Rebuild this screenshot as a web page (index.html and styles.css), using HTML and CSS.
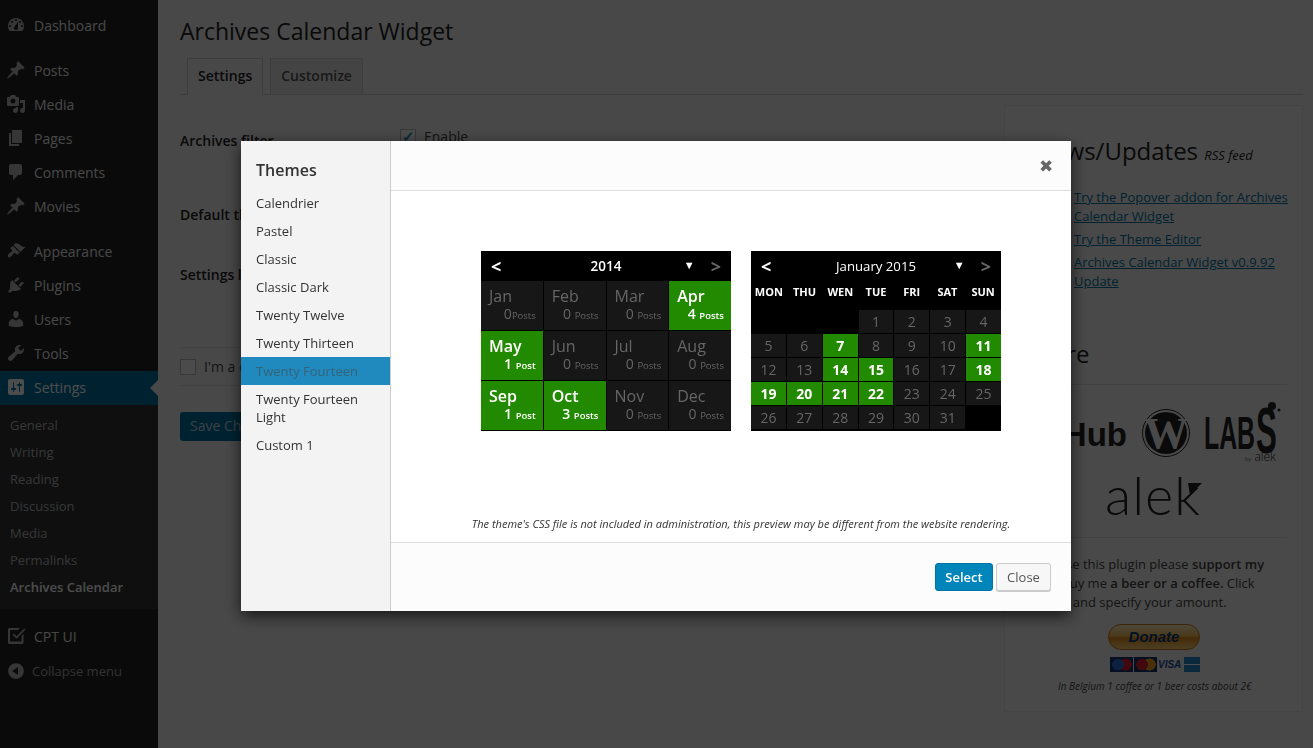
FILE: index.html
```html
<!DOCTYPE html>
<html>
<head>
  <title>Archives Calendar Widget</title>
  <link rel="stylesheet" href="styles.css">
</head>
<body>
  <div class="sidebar">
    <ul class="menu">
      <li class="group"><svg viewBox="0 0 20 20"><path d="M3.76 16h12.48c1.1-1.37 1.76-3.11 1.76-5 0-4.42-3.58-8-8-8s-8 3.58-8 8c0 1.89.66 3.63 1.76 5zM10 4c.55 0 1 .45 1 1s-.45 1-1 1-1-.45-1-1 .45-1 1-1zM6 6c.55 0 1 .45 1 1s-.45 1-1 1-1-.45-1-1 .45-1 1-1zm8 0c.55 0 1 .45 1 1s-.45 1-1 1-1-.45-1-1 .45-1 1-1zm-5.37 5.55L12 7v6c0 1.1-.9 2-2 2s-2-.9-2-2c0-.57.24-1.08.63-1.45zM4 10c.55 0 1 .45 1 1s-.45 1-1 1-1-.45-1-1 .45-1 1-1zm12 0c.55 0 1 .45 1 1s-.45 1-1 1-1-.45-1-1 .45-1 1-1z"/></svg>Dashboard</li>
      <li><svg viewBox="0 0 20 20"><path d="M10.44 3.02l1.82-1.82 6.36 6.35-1.83 1.82c-1.05-.68-2.48-.57-3.41.36l-.75.75c-.92.93-1.04 2.35-.35 3.41l-1.83 1.82-2.41-2.41-2.8 2.79c-.42.42-3.38 2.71-3.8 2.29s1.86-3.39 2.28-3.81l2.79-2.79L4.1 9.36l1.83-1.82c1.05.69 2.48.57 3.4-.36l.75-.75c.93-.92 1.05-2.35.36-3.41z"/></svg>Posts</li>
      <li><svg viewBox="0 0 20 20"><path d="M13 11V4c0-.55-.45-1-1-1h-1.67L9 1H5L3.67 3H2c-.55 0-1 .45-1 1v7c0 .55.45 1 1 1h10c.55 0 1-.45 1-1zM7 4.5c1.38 0 2.5 1.12 2.5 2.5S8.38 9.5 7 9.5 4.5 8.38 4.5 7 5.62 4.5 7 4.5zM14 6h5v10.5c0 1.38-1.12 2.5-2.5 2.5S14 17.88 14 16.5s1.12-2.5 2.5-2.5c.17 0 .34.02.5.05V9h-3V6zm-4 8.05V13h2v3.5c0 1.38-1.12 2.5-2.5 2.5S7 17.88 7 16.5 8.12 14 9.5 14c.17 0 .34.02.5.05z"/></svg>Media</li>
      <li><svg viewBox="0 0 20 20"><path d="M6 15V2h10v13H6zm-1 1h8v2H3V5h2v11z"/></svg>Pages</li>
      <li><svg viewBox="0 0 20 20"><path d="M5 2h9c1.1 0 2 .9 2 2v7c0 1.1-.9 2-2 2h-2l-5 5v-5H5c-1.1 0-2-.9-2-2V4c0-1.1.9-2 2-2z"/></svg>Comments</li>
      <li class="group"><svg viewBox="0 0 20 20"><path d="M10.44 3.02l1.82-1.82 6.36 6.35-1.83 1.82c-1.05-.68-2.48-.57-3.41.36l-.75.75c-.92.93-1.04 2.35-.35 3.41l-1.83 1.82-2.41-2.41-2.8 2.79c-.42.42-3.38 2.71-3.8 2.29s1.86-3.39 2.28-3.81l2.79-2.79L4.1 9.36l1.83-1.82c1.05.69 2.48.57 3.4-.36l.75-.75c.93-.92 1.05-2.35.36-3.41z"/></svg>Movies</li>
      <li><svg viewBox="0 0 20 20"><path d="M14.48 11.06L7.41 3.99l1.5-1.5c.5-.56 2.3-.47 3.51.32 1.21.8 1.43 1.28 2.91 2.1 1.18.64 2.45 1.26 4.45.85zm-.71.71L6.7 4.7 4.93 6.47c-.39.39-.39 1.02 0 1.41l1.06 1.06c.39.39.39 1.03 0 1.42-.6.6-1.4 1.1-2.2 1.7-.4.3-.7.5-1 .8-.9.9-1.5 2.4-.7 3.2.8.8 2.3.2 3.2-.7.3-.3.6-.7.8-1 .6-.8 1.1-1.6 1.7-2.2.4-.4 1-.4 1.4 0l1.1 1.1c.4.4 1 .4 1.4 0z"/></svg>Appearance</li>
      <li><svg viewBox="0 0 20 20"><path d="M13.11 4.36L9.87 7.6 8 5.73l3.24-3.24c.35-.34 1.05-.2 1.56.32.52.51.66 1.21.31 1.55zm-8 1.77l.91-1.12 9.01 9.01-1.19.84c-.71.71-2.63 1.16-3.82 1.16H6.14L4.9 17.26c-.59.59-1.54.59-2.12 0-.59-.58-.59-1.53 0-2.12l1.24-1.24v-3.88c0-1.13.4-3.19 1.09-3.89zm7.26 3.97l3.24-3.24c.34-.35 1.04-.21 1.55.31.52.51.66 1.21.31 1.55l-3.24 3.25z"/></svg>Plugins</li>
      <li><svg viewBox="0 0 20 20"><path d="M10 9.25c-2.27 0-2.73-3.44-2.73-3.44C7 4.02 7.82 2 9.97 2c2.16 0 2.98 2.02 2.71 3.81 0 0-.41 3.44-2.68 3.44zm0 2.57L12.72 10c2.39 0 4.52 2.33 4.52 4.53v2.49s-3.65 1.13-7.24 1.13c-3.65 0-7.24-1.13-7.24-1.13v-2.49c0-2.25 1.94-4.48 4.47-4.48z"/></svg>Users</li>
      <li><svg viewBox="0 0 20 20"><path d="M16.68 9.77c-1.34 1.34-3.3 1.67-4.95.99l-5.41 6.52c-.99.99-2.59.99-3.58 0s-.99-2.59 0-3.57l6.52-5.42c-.68-1.65-.35-3.61.99-4.95 1.28-1.28 3.12-1.62 4.72-1.06l-2.89 2.89 2.82 2.82 2.86-2.87c.53 1.58.18 3.39-1.08 4.65z"/></svg>Tools</li>
      <li class="active"><svg viewBox="0 0 20 20"><path d="M18 16V4c0-1.1-.9-2-2-2H4c-1.1 0-2 .9-2 2v12c0 1.1.9 2 2 2h12c1.1 0 2-.9 2-2zM8 11h1c.55 0 1 .45 1 1s-.45 1-1 1H8v1.5c0 .28-.22.5-.5.5s-.5-.22-.5-.5V13H6c-.55 0-1-.45-1-1s.45-1 1-1h1V5.5c0-.28.22-.5.5-.5s.5.22.5.5V11zm5-2h-1c-.55 0-1-.45-1-1s.45-1 1-1h1V5.5c0-.28.22-.5.5-.5s.5.22.5.5V7h1c.55 0 1 .45 1 1s-.45 1-1 1h-1v5.5c0 .28-.22.5-.5.5s-.5-.22-.5-.5V9z"/></svg>Settings</li>
    </ul>
    <ul class="submenu">
      <li>General</li>
      <li>Writing</li>
      <li>Reading</li>
      <li>Discussion</li>
      <li>Media</li>
      <li>Permalinks</li>
      <li class="current">Archives Calendar</li>
    </ul>
    <ul class="menu">
      <li class="cpt"><svg viewBox="0 0 20 20"><path d="M3.5 2H14l-2 2H4v11.5h11.5V10l2-2v8.5c0 .8-.7 1.5-1.5 1.5H3.5C2.700 18 2 17.300 2 16.500v-13C2 2.700 2.700 2 3.500 2zM18.200 2.600l1.200 1.200-8.900 9-4-4 1.300-1.300 2.700 2.700z"/></svg>CPT UI</li>
      <li class="collapse"><svg viewBox="0 0 20 20"><path d="M10 2.160c4.330 0 7.840 3.510 7.840 7.840s-3.510 7.840-7.840 7.840S2.160 14.330 2.160 10 5.710 2.160 10 2.160zm2 11.720V6.120L6.180 9.970z"/></svg>Collapse menu</li>
    </ul>
  </div>

  <div class="content">
    <h1>Archives Calendar Widget</h1>
    <div class="tabs">
      <span class="tab tab-active">Settings</span>
      <span class="tab">Customize</span>
    </div>
    <div class="columns">
      <div class="main">
        <div class="form-row row-filter">
          <b>Archives filter</b>
          <span class="enable"><span class="checkbox checked">&#10003;</span>Enable</span>
        </div>
        <div class="form-row row-theme"><b>Default theme</b></div>
        <div class="form-row row-settings"><b>Settings link</b></div>
        <div class="donated"><span class="checkbox"></span>I'm a coffee drinker</div>
        <span class="save-btn">Save Changes</span>
      </div>

      <div class="panel">
        <h2 class="news-title">News/Updates <small>RSS feed</small></h2>
        <ul class="news">
          <li><a>Try the Popover addon for Archives Calendar Widget</a></li>
          <li><a>Try the Theme Editor</a></li>
          <li><a>Archives Calendar Widget v0.9.92 Update</a></li>
        </ul>
        <h2 class="more-title">Share</h2>
        <svg class="logos" viewBox="0 0 263 144">
          <text x="102" y="53" text-anchor="end" class="logo-hub">GitHub</text>
          <circle cx="141" cy="40" r="23.500" class="wp-ring"/>
          <circle cx="141" cy="40" r="21" class="wp-disc"/>
          <text x="141" y="55" text-anchor="middle" class="logo-w">W</text>
          <text transform="translate(179 56) scale(.54 1)" class="logo-labs">LAB</text>
          <text transform="translate(231 60) scale(.48 1)" class="logo-s">S</text>
          <circle cx="247" cy="13" r="4" class="logo-dot"/>
          <circle cx="254" cy="17" r="1.500" class="logo-dot"/>
          <text x="220" y="68" class="logo-by"><tspan class="logo-by-small">by</tspan> alek</text>
          <text x="128" y="122" text-anchor="middle" class="logo-alek">alek</text>
          <path d="M163 90h14l-12 12-1-6z" class="logo-dot"/>
        </svg>
        <p class="support">If you use this plugin please <b>support my</b><br>work, buy me <b>a beer or a coffee.</b> Click<br>Donate and specify your amount.</p>
        <div class="donate-btn">Donate</div>
        <div class="cards">
          <span class="card card-maestro"></span>
          <span class="card card-master"></span>
          <span class="card card-visa">VISA</span>
          <span class="card card-amex"></span>
        </div>
        <p class="cost">In Belgium 1 coffee or 1 beer costs about 2€</p>
      </div>
    </div>
  </div>

  <div class="overlay"></div>

  <div class="modal">
    <div class="modal-side">
      <h3>Themes</h3>
      <ul class="theme-list">
        <li>Calendrier</li>
        <li>Pastel</li>
        <li>Classic</li>
        <li>Classic Dark</li>
        <li>Twenty Twelve</li>
        <li>Twenty Thirteen</li>
        <li class="selected">Twenty Fourteen</li>
        <li>Twenty Fourteen Light</li>
        <li>Custom 1</li>
      </ul>
    </div>
    <div class="modal-main">
      <div class="modal-head"><span class="close-x">&#10006;</span></div>
      <div class="modal-body">
        <div class="previews">
          <div class="cal">
            <div class="cal-head"><span class="nav">&lt;</span><span class="cal-title">2014</span><span class="cal-right"><span class="down">&#9660;</span><span class="nav nav-off">&gt;</span></span></div>
            <div class="months">
              <div class="month"><span class="m">Jan</span><span class="c">0<small>Posts</small></span></div>
              <div class="month"><span class="m">Feb</span><span class="c">0 <small>Posts</small></span></div>
              <div class="month"><span class="m">Mar</span><span class="c">0 <small>Posts</small></span></div>
              <div class="month on"><span class="m">Apr</span><span class="c">4 <small>Posts</small></span></div>
              <div class="month on"><span class="m">May</span><span class="c">1 <small>Post</small></span></div>
              <div class="month"><span class="m">Jun</span><span class="c">0 <small>Posts</small></span></div>
              <div class="month"><span class="m">Jul</span><span class="c">0 <small>Posts</small></span></div>
              <div class="month"><span class="m">Aug</span><span class="c">0 <small>Posts</small></span></div>
              <div class="month on"><span class="m">Sep</span><span class="c">1 <small>Post</small></span></div>
              <div class="month on"><span class="m">Oct</span><span class="c">3 <small>Posts</small></span></div>
              <div class="month"><span class="m">Nov</span><span class="c">0 <small>Posts</small></span></div>
              <div class="month"><span class="m">Dec</span><span class="c">0 <small>Posts</small></span></div>
            </div>
          </div>
          <div class="cal">
            <div class="cal-head"><span class="nav">&lt;</span><span class="cal-title cal-title-month">January 2015</span><span class="cal-right"><span class="down">&#9660;</span><span class="nav nav-off">&gt;</span></span></div>
            <div class="weekdays"><span>MON</span><span>THU</span><span>WEN</span><span>TUE</span><span>FRI</span><span>SAT</span><span>SUN</span></div>
            <div class="days">
              <span class="blank"></span><span class="blank"></span><span class="blank"></span><span>1</span><span>2</span><span>3</span><span>4</span>
              <span>5</span><span>6</span><span class="on">7</span><span>8</span><span>9</span><span>10</span><span class="on">11</span>
              <span>12</span><span>13</span><span class="on">14</span><span class="on">15</span><span>16</span><span>17</span><span class="on">18</span>
              <span class="on">19</span><span class="on">20</span><span class="on">21</span><span class="on">22</span><span>23</span><span>24</span><span>25</span>
              <span>26</span><span>27</span><span>28</span><span>29</span><span>30</span><span>31</span><span class="blank"></span>
            </div>
          </div>
        </div>
        <p class="note">The theme's CSS file is not included in administration, this preview may be different from the website rendering.</p>
      </div>
      <div class="modal-foot">
        <span class="btn btn-primary">Select</span>
        <span class="btn">Close</span>
      </div>
    </div>
  </div>
</body>
</html>
```

FILE: styles.css
```css
* {
  box-sizing: border-box;
}

html, body {
  height: 100%;
}

body {
  margin: 0;
  display: flex;
  height: 748px;
  overflow: hidden;
  background: #f1f1f1;
  color: #444;
  font-family: "Open Sans", sans-serif;
  font-size: 14px;
}

ul {
  list-style: none;
  margin: 0;
  padding: 0;
}

/* admin sidebar */
.sidebar {
  width: 158px;
  flex: none;
  padding-top: 9px;
  background: #222;
  color: #eee;
}

.menu li {
  display: flex;
  align-items: center;
  height: 34px;
  padding: 0 0 2px 6px;
  font-size: 14px;
}

.menu li svg {
  width: 20px;
  height: 20px;
  margin-right: 8px;
  flex: none;
  fill: #b4b4b4;
}

.menu li.group {
  margin-bottom: 11px;
}

.menu li.active {
  position: relative;
  background: #0074a2;
  color: #fff;
}

.menu li.active svg {
  fill: #fff;
}

.menu li.active::after {
  content: "";
  position: absolute;
  right: 0;
  top: 9px;
  border: 8px solid transparent;
  border-right-color: #f1f1f1;
  border-left-width: 0;
}

.submenu {
  padding: 7px 0 8px;
  background: #333;
  margin-bottom: 11px;
}

.submenu li {
  height: 27px;
  line-height: 27px;
  padding-left: 10px;
  font-size: 13px;
  color: #b4b9be;
}

.submenu li.current {
  font-weight: 600;
  color: #fff;
}

.menu li.cpt {
  color: #eee;
}

.menu li.collapse {
  padding-bottom: 0;
  color: #aaa;
  font-size: 13px;
}

.menu li.collapse svg {
  margin-right: 6px;
}

/* page behind the modal */
.content {
  flex: 1;
  padding: 0 17px 0 22px;
}

h1 {
  margin: 0;
  padding-top: 15px;
  height: 58px;
  font-size: 23px;
  font-weight: 400;
  line-height: 32px;
  color: #222;
}

.tabs {
  display: flex;
  gap: 7px;
  padding-left: 7px;
  height: 37px;
  border-bottom: 1px solid #ccc;
}

.tab {
  height: 37px;
  padding: 0 10px;
  line-height: 34px;
  border: 1px solid #ccc;
  font-weight: 600;
  color: #555;
  background: #e4e4e4;
}

.tab-active {
  background: #f1f1f1;
  border-bottom-color: #f1f1f1;
  color: #222;
}

.columns {
  display: flex;
}

.main {
  width: 824px;
  flex: none;
}

.form-row {
  color: #222;
  line-height: 20px;
}

.form-row b {
  font-weight: 600;
}

.row-filter {
  display: flex;
  padding: 36px 0 0;
  height: 110px;
}

.row-filter b {
  width: 220px;
}

.row-theme {
  height: 60px;
}

.row-settings {
  height: 82px;
}

.enable {
  display: flex;
  align-items: center;
  height: 20px;
  margin-top: -4px;
  gap: 8px;
  color: #444;
}

.checkbox {
  display: inline-block;
  width: 16px;
  height: 16px;
  line-height: 13px;
  border: 1px solid #b4b9be;
  background: #fbfbfb;
  text-align: center;
  font-size: 15px;
  font-weight: 700;
  color: #1e8cbe;
}

.donated {
  display: flex;
  align-items: center;
  gap: 8px;
  height: 39px;
  border-top: 1px solid #ddd;
  border-bottom: 1px solid #ddd;
}

.save-btn {
  display: inline-block;
  margin-top: 26px;
  width: 140px;
  height: 29px;
  padding-left: 10px;
  line-height: 27px;
  border-radius: 3px;
  background: #0074a2;
  color: #c4d8e2;
}

.panel {
  width: 299px;
  height: 607px;
  flex: none;
  margin-top: 10px;
  padding: 0 15px 0 20px;
  background: #f5f5f5;
  border: 1px solid #e5e5e5;
}

h2 {
  margin: 0;
  font-size: 24px;
  font-weight: 400;
  line-height: 36px;
  color: #222;
}

h2 small {
  font-size: 13px;
  font-style: italic;
}

.news-title {
  margin-left: 9px;
  padding-top: 27px;
  height: 81px;
  white-space: nowrap;
}

.news {
  margin-right: -6px;
  padding: 1px 0 0 49px;
  font-size: 13px;
  line-height: 19px;
}

.news li {
  margin-bottom: 4px;
}

.news a {
  color: #0074a2;
  text-decoration: underline;
}

h2.more-title {
  margin: 40px 0 0;
  height: 54px;
  border-bottom: 1px solid #ddd;
  line-height: 46px;
}

.logos {
  display: block;
  width: 263px;
  height: 144px;
  margin-top: 8px;
}

.logo-hub {
  font: 700 33px "Liberation Sans", sans-serif;
  fill: #222;
}

.wp-ring {
  fill: none;
  stroke: #222;
  stroke-width: 1;
}

.wp-disc, .logo-dot {
  fill: #222;
}

.logo-w {
  font: 700 44px "Liberation Serif", serif;
  fill: #f5f5f5;
}

.logo-labs {
  font: 700 46px "Liberation Sans", sans-serif;
  fill: #222;
}

.logo-s {
  font: 700 65px "Liberation Sans", sans-serif;
  fill: #222;
}

.logo-by {
  font: 300 12px "Open Sans", sans-serif;
  fill: #222;
}

.logo-by-small {
  font-size: 6px;
}

.logo-alek {
  font: 300 54px "Lato", sans-serif;
  fill: #222;
  letter-spacing: 1px;
}

.support {
  margin: 0 0 0 -4px;
  padding: 17px 0 0 4px;
  border-top: 1px solid #ddd;
  font-size: 13px;
  line-height: 19px;
  text-indent: -4px;
}

.support b {
  font-weight: 600;
}

.donate-btn {
  width: 92px;
  height: 26px;
  margin: 12px 0 0 83px;
  border: 1px solid #c9781d;
  border-radius: 13px;
  background: linear-gradient(#fff3c4, #f9c25a 45%, #e8901e 55%, #ffd37a);
  color: #0a3a78;
  font: italic 700 15px/23px "Liberation Sans", sans-serif;
  text-align: center;
}

.cards {
  display: flex;
  gap: 1px;
  margin: 7px 0 0 85px;
  height: 15px;
}

.card {
  width: 23px;
  height: 15px;
  background: #fff;
}

.card-maestro {
  background: radial-gradient(circle at 35% 50%, #2b6fd6 0 34%, transparent 36%), radial-gradient(circle at 68% 50%, #e01c2c 0 34%, transparent 36%), #12346e;
}

.card-master {
  background: radial-gradient(circle at 35% 50%, #d8202c 0 34%, transparent 36%), radial-gradient(circle at 68% 50%, #f0a020 0 34%, transparent 36%), #12346e;
}

.card-visa {
  background: transparent;
  color: #1a4fa0;
  font: italic 700 10px/15px "Liberation Sans", sans-serif;
  text-align: center;
}

.card-amex {
  width: 16px;
  margin-left: 2px;
  background: linear-gradient(#2a87c8 45%, #fff 45% 55%, #2a87c8 55%);
}

.cost {
  margin: 7px 0 0 33px;
  font-size: 10px;
  font-style: italic;
  line-height: 14px;
}

/* modal */
.overlay {
  position: fixed;
  inset: 0;
  background: rgba(0, 0, 0, .7);
}

.modal {
  position: fixed;
  left: 241px;
  top: 141px;
  width: 830px;
  height: 470px;
  display: flex;
  background: #fff;
  box-shadow: 0 5px 15px rgba(0, 0, 0, .7);
}

.modal-side {
  width: 150px;
  flex: none;
  background: #f3f3f3;
  border-right: 1px solid #ccc;
}

.modal-side h3 {
  margin: 0;
  padding: 18px 15px 0;
  height: 48px;
  font-size: 16px;
  font-weight: 600;
  line-height: 22px;
  color: #333;
}

.theme-list li {
  padding: 5px 15px;
  font-size: 13px;
  line-height: 18px;
  color: #333;
}

.theme-list li.selected {
  background: #2089bd;
  color: #35637a;
}

.modal-main {
  flex: 1;
  display: flex;
  flex-direction: column;
}

.modal-head {
  display: flex;
  justify-content: flex-end;
  align-items: center;
  height: 50px;
  padding-right: 18px;
  background: #fcfcfc;
  border-bottom: 1px solid #ddd;
}

.close-x {
  font-size: 17px;
  color: #666;
}

.modal-body {
  flex: 1;
  display: flex;
  flex-direction: column;
  align-items: center;
  padding-left: 20px;
}

.previews {
  display: flex;
  gap: 20px;
  padding-top: 60px;
  height: 323px;
}

.note {
  margin: 0;
  padding-top: 2px;
  font-size: 11px;
  font-style: italic;
  line-height: 15px;
  white-space: nowrap;
  color: #333;
}

.modal-foot {
  display: flex;
  justify-content: flex-end;
  gap: 3px;
  height: 69px;
  padding: 20px 20px 0 0;
  background: #fcfcfc;
  border-top: 1px solid #ddd;
}

.btn {
  width: 55px;
  height: 28px;
  line-height: 26px;
  border: 1px solid #ccc;
  border-radius: 3px;
  background: #f7f7f7;
  box-shadow: 0 1px 0 #ccc;
  text-align: center;
  font-size: 13px;
  color: #555;
}

.btn-primary {
  width: 58px;
  border-color: #0074a2;
  background: #0085ba;
  box-shadow: none;
  color: #fff;
  font-weight: 600;
}

/* calendars */
.cal {
  width: 250px;
  height: 180px;
  background: #000;
  color: #fff;
}

.cal-head {
  display: grid;
  grid-template-columns: 1fr auto 1fr;
  align-items: center;
  height: 30px;
  padding: 0 10px;
}

.cal-head .nav {
  font-size: 18px;
  font-weight: 700;
  line-height: 20px;
}

.cal-head .nav-off {
  color: #666;
}

.cal-right {
  display: flex;
  justify-content: flex-end;
  align-items: center;
}

.cal-title {
  font-size: 13.5px;
  font-weight: 600;
}

.cal-title-month {
  font-size: 13.2px;
  font-weight: 400;
}

.down {
  margin: -4px 16px 0 0;
  font-size: 11px;
}

.months {
  display: grid;
  grid-template-columns: repeat(4, 1fr);
  grid-auto-rows: 49px;
  gap: 1px;
}

.month {
  display: flex;
  flex-direction: column;
  padding: 4px 7px 0 8px;
  background: #171717;
  color: #666;
}

.month .m {
  font-size: 16px;
  line-height: 22px;
}

.month .c {
  margin-top: -2px;
  text-align: right;
  font-size: 14px;
  line-height: 17px;
}

.month small {
  font-size: 9.5px;
}

.month.on {
  background: #228a00;
  color: #fff;
  font-weight: 600;
}

.weekdays {
  display: grid;
  grid-template-columns: repeat(7, 1fr);
  height: 29px;
  font-size: 11px;
  font-weight: 700;
  line-height: 21px;
  text-align: center;
}

.days {
  display: grid;
  grid-template-columns: repeat(7, 1fr);
  grid-auto-rows: 23px;
  gap: 1px;
}

.days span {
  background: #171717;
  color: #666;
  text-align: center;
  font-size: 14px;
  line-height: 23px;
}

.days span.blank {
  background: #000;
}

.days span.on {
  background: #228a00;
  color: #fff;
  font-weight: 700;
}
```
